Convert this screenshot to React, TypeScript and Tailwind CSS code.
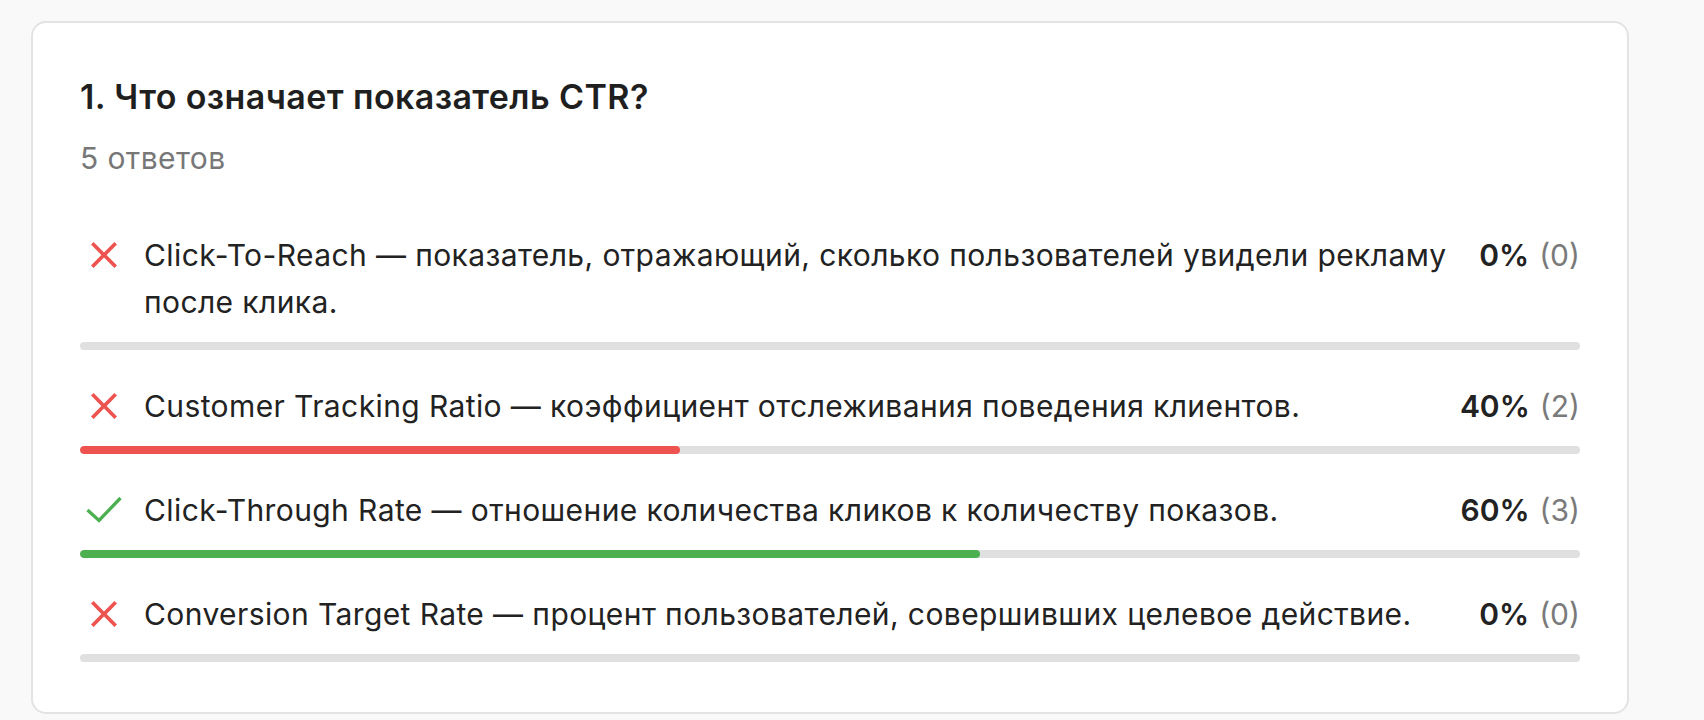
import React from "react";

type Answer = {
  text: string;
  correct: boolean;
  percent: number;
  count: number;
};

const answers: Answer[] = [
  {
    text: "Click-To-Reach — показатель, отражающий, сколько пользователей увидели рекламу после клика.",
    correct: false,
    percent: 0,
    count: 0,
  },
  {
    text: "Customer Tracking Ratio — коэффициент отслеживания поведения клиентов.",
    correct: false,
    percent: 40,
    count: 2,
  },
  {
    text: "Click-Through Rate — отношение количества кликов к количеству показов.",
    correct: true,
    percent: 60,
    count: 3,
  },
  {
    text: "Conversion Target Rate — процент пользователей, совершивших целевое действие.",
    correct: false,
    percent: 0,
    count: 0,
  },
];

function CrossIcon() {
  return (
    <svg width="26" height="26" viewBox="5 5 14 14" className="fill-[#ef5350]">
      <path d="M19 6.41L17.59 5 12 10.59 6.41 5 5 6.41 10.59 12 5 17.59 6.41 19 12 13.41 17.59 19 19 17.59 13.41 12z" />
    </svg>
  );
}

function CheckIcon() {
  return (
    <svg width="36" height="28" viewBox="0 0 36 28" fill="none">
      <polyline
        points="1.5,14 13,24.5 34.5,2"
        stroke="#4caf50"
        strokeWidth="3.3"
        strokeLinejoin="miter"
      />
    </svg>
  );
}

function AnswerRow({ answer }: { answer: Answer }) {
  return (
    <div className="flex flex-col">
      <div className="flex items-start">
        <div className="w-[47px] h-[47px] shrink-0 flex items-center justify-center -mt-[1px]">
          {answer.correct ? <CheckIcon /> : <CrossIcon />}
        </div>
        <p className="flex-1 ml-[17px] text-[30px] leading-[47px] tracking-[0.4px] text-[#222222]">
          {answer.text}
        </p>
        <div className="shrink-0 ml-3 flex items-center gap-[10px] text-[30px] leading-[47px]">
          <span className="font-semibold text-[#222222]">{answer.percent}%</span>
          <span className="text-[#7a7a7a]">({answer.count})</span>
        </div>
      </div>
      <div className="mt-4 h-2 w-full rounded-full bg-[#e0e0e0] overflow-hidden">
        {answer.percent > 0 && (
          <div
            className={`h-full rounded-full ${
              answer.correct ? "bg-[#4caf50]" : "bg-[#ef5350]"
            }`}
            style={{ width: `${answer.percent}%` }}
          />
        )}
      </div>
    </div>
  );
}

export default function App() {
  return (
    <div
      className="min-h-screen w-full bg-[#f9f9f9] pt-[21px] pl-[31px]"
      style={{ fontFamily: "Inter, 'Noto Sans', sans-serif" }}
    >
      <div className="w-[1598px] bg-white border-2 border-[#e3e3e3] rounded-[15px] px-[47px] pt-[54px] pb-[50px]">
        <h2 className="text-[34px] leading-[40px] font-semibold tracking-[0.4px] text-[#1f1f1f]">
          1. Что означает показатель CTR?
        </h2>
        <p className="mt-6 text-[30px] leading-[34px] tracking-[0.4px] text-[#777777]">5 ответов</p>

        <div className="mt-[57px] flex flex-col gap-[33px]">
          {answers.map((answer, index) => (
            <AnswerRow key={index} answer={answer} />
          ))}
        </div>
      </div>
    </div>
  );
}
